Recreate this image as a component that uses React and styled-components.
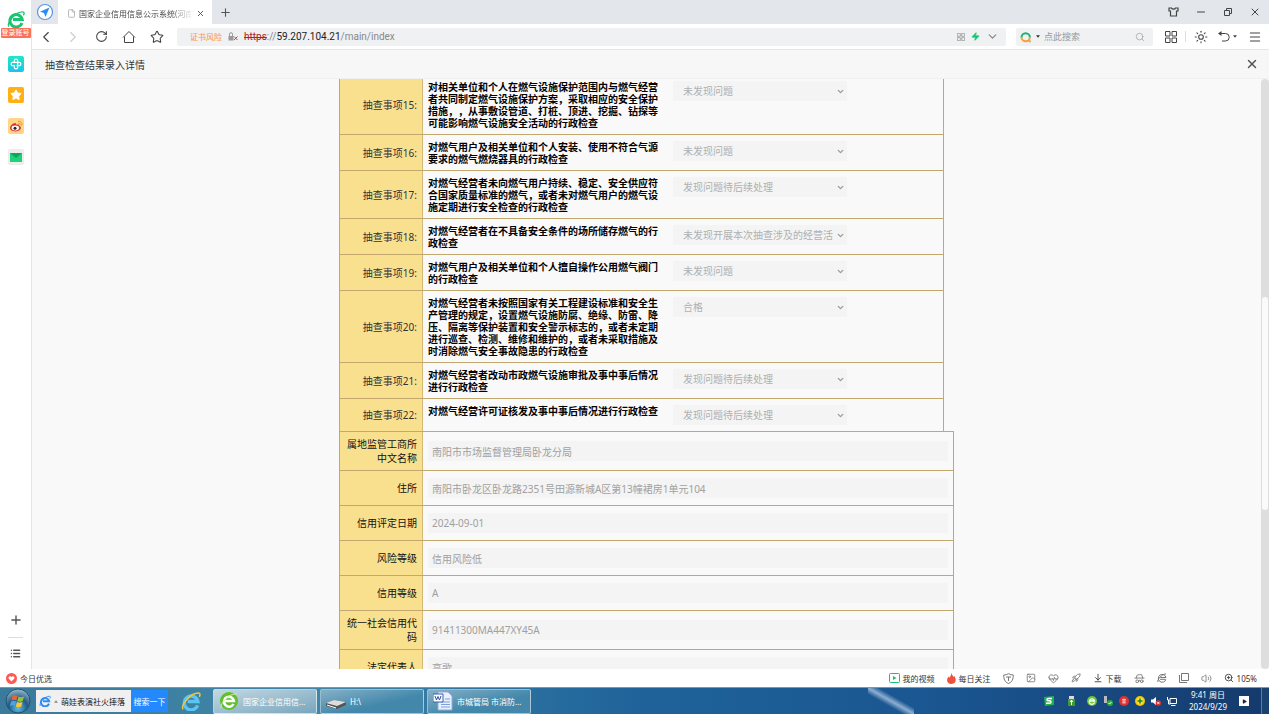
import React from "react"
import styled, { createGlobalStyle } from "styled-components"
import {
    ChevronLeft, ChevronRight, ChevronDown, RotateCw, Star, Search, Plus, X, Minus,
    Menu, List, Sun, File, Image, HeartPulse, Rocket, ArrowDownToLine, Volume2,
    ZoomIn, HatGlasses, Play, Zap
} from "lucide-react"

const CHECK_ITEMS = [
    { no: 15, text: "对相关单位和个人在燃气设施保护范围内与燃气经营者共同制定燃气设施保护方案，采取相应的安全保护措施，，从事敷设管道、打桩、顶进、挖掘、钻探等可能影响燃气设施安全活动的行政检查", result: "未发现问题" },
    { no: 16, text: "对燃气用户及相关单位和个人安装、使用不符合气源要求的燃气燃烧器具的行政检查", result: "未发现问题" },
    { no: 17, text: "对燃气经营者未向燃气用户持续、稳定、安全供应符合国家质量标准的燃气，或者未对燃气用户的燃气设施定期进行安全检查的行政检查", result: "发现问题待后续处理" },
    { no: 18, text: "对燃气经营者在不具备安全条件的场所储存燃气的行政检查", result: "未发现开展本次抽查涉及的经营活" },
    { no: 19, text: "对燃气用户及相关单位和个人擅自操作公用燃气阀门的行政检查", result: "未发现问题" },
    { no: 20, text: "对燃气经营者未按照国家有关工程建设标准和安全生产管理的规定，设置燃气设施防腐、绝缘、防雷、降压、隔离等保护装置和安全警示标志的，或者未定期进行巡查、检测、维修和维护的，或者未采取措施及时消除燃气安全事故隐患的行政检查", result: "合格" },
    { no: 21, text: "对燃气经营者改动市政燃气设施审批及事中事后情况进行行政检查", result: "发现问题待后续处理" },
    { no: 22, text: "对燃气经营许可证核发及事中事后情况进行行政检查", result: "发现问题待后续处理" },
];

const COMPANY_FIELDS = [
    { id: "office", label: "属地监管工商所中文名称", value: "南阳市市场监督管理局卧龙分局" },
    { id: "address", label: "住所", value: "南阳市卧龙区卧龙路2351号田源新城A区第13幢裙房1单元104" },
    { id: "rateDate", label: "信用评定日期", value: "2024-09-01" },
    { id: "risk", label: "风险等级", value: "信用风险低" },
    { id: "credit", label: "信用等级", value: "A" },
    { id: "code", label: "统一社会信用代码", value: "91411300MA447XY45A" },
    { id: "legal", label: "法定代表人", value: "高歌" },
];

const App = () =>
    <Screen>
        <GlobalStyle/>
        <Workspace>
            <Sidebar/>
            <Browser>
                <TabBar/>
                <Toolbar/>
                <DialogHeader>
                    <DialogTitle>抽查检查结果录入详情</DialogTitle>
                    <IconButton aria-label="关闭"><X size={14} strokeWidth={2.5}/></IconButton>
                </DialogHeader>
                <DialogBody>
                    <Form>
                        <CheckList>
                            {CHECK_ITEMS.map(item => <CheckItem key={item.no} {...item}/>)}
                        </CheckList>
                        <FieldList>
                            {COMPANY_FIELDS.map(field => <Field key={field.id} {...field}/>)}
                        </FieldList>
                    </Form>
                    <ScrollTrack><ScrollThumb/></ScrollTrack>
                </DialogBody>
            </Browser>
        </Workspace>
        <StatusBar/>
        <Taskbar/>
    </Screen>;

const CheckItem = ({ no, text, result }) =>
    <Row>
        <RowLabel htmlFor={`item${no}`}>抽查事项{no}:</RowLabel>
        <ItemText>{text}</ItemText>
        <SelectBox>
            <Select id={`item${no}`} disabled defaultValue={result}>
                <option>{result}</option>
            </Select>
            <ChevronDown size={9} strokeWidth={3.5}/>
        </SelectBox>
    </Row>;

const Field = ({ id, label, value }) =>
    <Row>
        <RowLabel htmlFor={id} $dark>{label}</RowLabel>
        <InputBox>
            <Input id={id} disabled defaultValue={value}/>
        </InputBox>
    </Row>;

const BrowserE = ({ size, color, swoosh }) =>
    <svg width={size} height={size} viewBox="0 0 24 24" fill="none" stroke={color}>
        <path d="M20 17.2A8.3 8.3 0 1 1 20.3 12.6H8" strokeWidth="4"/>
        <path d="M2.5 22C-.5 18 10 2.500 21 2.500c2.500 0 2 3 .8 4.500" stroke={swoosh || color} strokeWidth="1.800"/>
    </svg>;

const Sidebar = () =>
    <SideColumn>
        <Account>
            <BrowserE size={18} color="#17c671"/>
            <AccountBadge>登录账号</AccountBadge>
        </Account>
        <SideApps>
            <AppTile aria-label="健康" $background="linear-gradient(#1fe8c4, #1cc3ea)">
                <svg width="12" height="12" viewBox="0 0 12 12" fill="none" stroke="#fff" strokeWidth="1.200">
                    <path d="M4.300 4.300V2.800a1.700 1.700 0 0 1 3.400 0v6.400a1.700 1.700 0 0 1-3.400 0V7.700H2.800a1.700 1.700 0 0 1 0-3.400h6.400a1.700 1.700 0 0 1 0 3.400H6.500"/>
                </svg>
            </AppTile>
            <AppTile aria-label="收藏" $background="#ffb014">
                <Star size={12} fill="#fff" stroke="#fff"/>
            </AppTile>
            <AppTile aria-label="微博" $background="#ffd588">
                <svg width="14" height="14" viewBox="0 0 14 14">
                    <path d="M1 9c0-2 3-5 5-5 1.500 0 .8 1.600 1.300 1.600S10 5 10.300 6.400c.2.800 1.700.8 1.700 2.400 0 2-2.500 3.600-5.500 3.600S1 11 1 9z" fill="#e0352b"/>
                    <ellipse cx="6.300" cy="9" rx="3.700" ry="2.400" fill="#fff"/>
                    <circle cx="6" cy="9.200" r="1.500" fill="#222"/>
                    <path d="M9.200 2.200a3.400 3.400 0 0 1 3.600 4.300M9.300 4a1.600 1.600 0 0 1 1.700 2" fill="none" stroke="#f0932b"/>
                </svg>
            </AppTile>
            <AppTile aria-label="邮箱" $background="#ececec">
                <svg width="12" height="9" viewBox="0 0 12 9">
                    <path d="M0 0h12v9H0z" fill="#1fd17c"/>
                    <path d="M0 0h12L6 5z" fill="#0da65a"/>
                </svg>
            </AppTile>
        </SideApps>
        <SideTools>
            <IconButton aria-label="添加"><Plus size={14} strokeWidth={2.4}/></IconButton>
            <SideLine/>
            <IconButton aria-label="列表"><List size={11} strokeWidth={3}/></IconButton>
        </SideTools>
    </SideColumn>;

const TabBar = () =>
    <Tabs>
        <TabSlot aria-label="导航">
            <svg width="18" height="18" viewBox="0 0 18 18">
                <circle cx="9" cy="9" r="7.500" fill="#fff" stroke="#5b93e8" strokeWidth="1.200"/>
                <path d="M13.500 4.500L4 8.700l4 1.300 1.500 4z" fill="#2b8cf5"/>
            </svg>
        </TabSlot>
        <Tab>
            <File size={9} strokeWidth={1.8} color="#999"/>
            <TabTitle>国家企业信用信息公示系统(河南</TabTitle>
            <IconButton aria-label="关闭标签"><X size={9} strokeWidth={2.5}/></IconButton>
        </Tab>
        <TabSlot aria-label="新标签"><Plus size={13} strokeWidth={2}/></TabSlot>
        <WindowControls>
            <ToolButton aria-label="皮肤">
                <svg width="11" height="10" viewBox="0 0 11 10" fill="none" stroke="currentColor" strokeWidth="1.200">
                    <path d="M1 1h2.500c.5 1.500 3.500 1.500 4 0H10v3H8.500v5h-6V4H1z"/>
                </svg>
            </ToolButton>
            <ToolButton aria-label="最小化"><Minus size={12} strokeWidth={2}/></ToolButton>
            <ToolButton aria-label="还原">
                <svg width="8" height="8" viewBox="0 0 8 8" fill="none" stroke="currentColor">
                    <path d="M.5 2.500h5v5h-5zM2.500 2.500v-2h5v5h-2"/>
                </svg>
            </ToolButton>
            <ToolButton aria-label="关闭窗口"><X size={12} strokeWidth={2}/></ToolButton>
        </WindowControls>
    </Tabs>;

const GridIcon = ({ size }) =>
    <svg width={size} height={size} viewBox="0 0 12 12" fill="none" stroke="currentColor">
        <path d="M.5.5h4.500v4.500H.5zM7 .5h4.500v4.500H7zM.5 7h4.500v4.500H.5zM7 7h4.500v4.500H7z"/>
    </svg>;

const Caret = ({ up }) =>
    <svg width="4" height="3" viewBox="0 0 5 3">
        <path d={up ? "M0 3h5L2.500 0z" : "M0 0h5L2.500 3z"} fill={up ? "#888" : "currentColor"}/>
    </svg>;

const Toolbar = () =>
    <Tools>
        <NavButtons>
            <ToolButton aria-label="后退"><ChevronLeft size={18} strokeWidth={1.5}/></ToolButton>
            <ToolButton aria-label="前进" $faint><ChevronRight size={18} strokeWidth={1.5}/></ToolButton>
            <ToolButton aria-label="刷新"><RotateCw size={13} strokeWidth={1.9}/></ToolButton>
            <ToolButton aria-label="主页">
                <svg width="14" height="14" viewBox="0 0 14 14" fill="none" stroke="currentColor">
                    <path d="M1 7.500L7 1.500l6 6M2.500 6.500v6h9v-6"/>
                </svg>
            </ToolButton>
            <ToolButton aria-label="收藏"><Star size={14} strokeWidth={1.8}/></ToolButton>
        </NavButtons>
        <AddressField>
            <Risk>证书风险</Risk>
            <svg width="10" height="9" viewBox="0 0 10 9" fill="none">
                <path d="M.5 4h5v4.500h-5z" fill="#999"/>
                <path d="M1.500 4V2.200a1.500 1.500 0 0 1 3 0V4" stroke="#999"/>
                <path d="M6 4.500l3.500 3.500M9.500 4.500L6 8" stroke="#e23b3b"/>
            </svg>
            <Url><UrlScheme>https</UrlScheme>://<UrlHost>59.207.104.21</UrlHost>/main/index</Url>
            <GridIcon size={8}/>
            <Zap size={9} fill="#17c671" color="#17c671"/>
            <ChevronDown size={13} strokeWidth={2.2}/>
        </AddressField>
        <SearchField>
            <svg width="12" height="12" viewBox="0 0 12 12" fill="none" strokeWidth="2">
                <path d="M1.500 6.500a4.200 4.200 0 1 1 8.400 0" stroke="#19b36b"/>
                <path d="M1.500 6a4.200 4.200 0 0 0 8.400 0M8 8.500l2.500 2.500" stroke="#f5a13a"/>
            </svg>
            <Caret/>
            <SearchInput aria-label="搜索" placeholder="点此搜索"/>
            <Search size={10} strokeWidth={2} color="#aaa"/>
        </SearchField>
        <ToolButtons>
            <ToolButton aria-label="应用"><GridIcon size={12}/></ToolButton>
            <Divider/>
            <ToolButton aria-label="亮度"><Sun size={14} strokeWidth={1.8}/></ToolButton>
            <ToolButton aria-label="撤销">
                <svg width="12" height="11" viewBox="0 0 12 11" fill="none" stroke="currentColor">
                    <path d="M2 2.500h5.500a3.700 3.700 0 0 1 0 7.500H4"/>
                    <path d="M0 2.500L3.500 0v5z" fill="currentColor" stroke="none"/>
                </svg>
                <Caret/>
            </ToolButton>
            <ToolButton aria-label="菜单"><Menu size={14} strokeWidth={1.8}/></ToolButton>
        </ToolButtons>
    </Tools>;

const StatusBar = () =>
    <Status>
        <StatusItem>
            <svg width="11" height="11" viewBox="0 0 11 11">
                <circle cx="5.500" cy="5.500" r="5.500" fill="#fa5a55"/>
                <path d="M5.500 8.500L2.800 5.800a1.600 1.600 0 0 1 2.700-1.800 1.600 1.600 0 0 1 2.700 1.800z" fill="#fff"/>
            </svg>
            今日优选
        </StatusItem>
        <StatusGroup>
            <StatusItem>
                <svg width="11" height="10" viewBox="0 0 11 10">
                    <rect x=".5" y=".5" width="10" height="9" rx="1" fill="none" stroke="#19c172"/>
                    <path d="M4 3v4l3.500-2z" fill="#19c172"/>
                </svg>
                我的视频
            </StatusItem>
            <StatusItem>
                <svg width="9" height="11" viewBox="0 0 9 11">
                    <path d="M4.500 0c.3 2 1.500 2.500 2 4l.8-1C9.500 6 9.500 11 4.500 11S-.8 6.500 1.500 3.500l.8 1.200C3.500 3.500 4 2 4.500 0z" fill="#f0503c"/>
                </svg>
                每日关注
            </StatusItem>
            <StatusIcons>
                <svg width="11" height="11" viewBox="0 0 11 11" fill="none" stroke="currentColor">
                    <path d="M5.500.7C4 1.600 2.500 2 .7 2c0 4 1 7 4.800 8.500C9.300 9 10.300 6 10.300 2 8.500 2 7 1.600 5.500.7zM3 4h5M5.500 4v4"/>
                </svg>
                <Image size={10}/>
                <HeartPulse size={11}/>
                <Rocket size={10}/>
            </StatusIcons>
            <StatusItem><ArrowDownToLine size={10}/>下载</StatusItem>
            <StatusIcons>
                <HatGlasses size={11}/>
                <BrowserOutline/>
                <svg width="10" height="10" viewBox="0 0 10 10" fill="none" stroke="currentColor">
                    <path d="M2.500.5h7v7h-7zM.5 2v7.500H8"/>
                </svg>
                <Volume2 size={11} strokeWidth={1.8}/>
            </StatusIcons>
            <StatusItem><ZoomIn size={10}/>105%</StatusItem>
        </StatusGroup>
    </Status>;

const BrowserOutline = () =>
    <svg width="10" height="10" viewBox="0 0 10 10" fill="none" stroke="currentColor">
        <path d="M8.800 6.800A3.900 3.900 0 1 1 9 4.500H3.500M3 6.300h5.800M.8 9C.3 7 4.500 1 9 .9"/>
    </svg>;

const Taskbar = () =>
    <Task>
        <StartButton aria-label="开始">
            <svg width="26" height="26" viewBox="0 0 26 26">
                <defs>
                    <radialGradient id="orb" cx="50%" cy="80%" r="80%">
                        <stop offset="0" stopColor="#5cc0e8"/>
                        <stop offset=".5" stopColor="#225a85"/>
                        <stop offset="1" stopColor="#9cbccc"/>
                    </radialGradient>
                </defs>
                <circle cx="13" cy="13" r="12" fill="url(#orb)" stroke="#25506c"/>
                <path d="M7.500 8c2-1.200 3.500-1 5 0l-1.200 4.500c-1.500-1-3-1-5 0z" fill="#ee6236"/>
                <path d="M13.500 8.500c1.500 1 3.500 1 5.500 0L17.800 13c-2 1-4 1-5.500 0z" fill="#8cc63f"/>
                <path d="M6 13.500c2-1 3.500-1 5 0L9.800 18c-1.500-1-3-1-5 0z" fill="#4aa3e8"/>
                <path d="M12 14c1.500 1 3.500 1 5.500 0l-1.200 4.500c-2 1-4 1-5.500 0z" fill="#fdc82f"/>
            </svg>
        </StartButton>
        <HotSearch>
            <BrowserE size={12} color="#2b8cf5"/>
            <Caret up/>
            <span>萌娃表演社火摔落</span>
        </HotSearch>
        <SearchButton>搜索一下</SearchButton>
        <QuickLaunch aria-label="浏览器"><BrowserE size={20} color="#5cc4f2" swoosh="#f5c531"/></QuickLaunch>
        <TaskButton $active>
            <svg width="20" height="20" viewBox="0 0 20 20" fill="none">
                <circle cx="10" cy="10" r="9" fill="#5fbf2c"/>
                <path d="M14.500 13a5 5 0 1 1 .5-3H6" stroke="#fff" strokeWidth="2.500"/>
                <path d="M2 17C1 12 10 2 18 3" stroke="#c9ee9a"/>
            </svg>
            <TaskTitle>国家企业信用信...</TaskTitle>
        </TaskButton>
        <TaskButton>
            <svg width="20" height="20" viewBox="0 0 20 20">
                <path d="M0 12l8-3 12 2v3l-9 4-11-3z" fill="#555"/>
                <path d="M0 12l8-3 12 2-9 4z" fill="#ddd"/>
                <path d="M1 14l9 3" stroke="#fff"/>
            </svg>
            <TaskTitle>H:\</TaskTitle>
        </TaskButton>
        <TaskButton>
            <svg width="20" height="20" viewBox="0 0 20 20" fill="none">
                <path d="M5 1h10l4 4v14H5z" fill="#e8f0fb" stroke="#90abd8"/>
                <path d="M8 11h9M8 13.500h9M8 16h9M12 8h5" stroke="#7f9fdd"/>
                <path d="M0 3h10v8H0z" fill="#fff" stroke="#3b5fb5"/>
                <path d="M2 5l1.500 4L5 5.500 6.500 9 8 5" stroke="#2a4fa8"/>
            </svg>
            <TaskTitle>市城管局 市消防...</TaskTitle>
        </TaskButton>
        <Tray>
            <TrayIcons>
                <svg width="10" height="10" viewBox="0 0 10 10" fill="none">
                    <path d="M0 1l10-1v9L1 10z" fill="#21b34b"/>
                    <path d="M8 2.500H4.500c-2 0-2 2.300 0 2.300h1c2 0 2 2.500 0 2.500H2" stroke="#fff" strokeWidth="1.500"/>
                </svg>
                <svg width="7" height="10" viewBox="0 0 7 10">
                    <path d="M1 0h5v3H1z" fill="#ddd"/><path d="M0 3h7v7H0z" fill="#3f9a35"/>
                    <path d="M3.500 4v5M2 6l1.500-2L5 6" stroke="#fff" fill="none"/>
                </svg>
            </TrayIcons>
            <TrayIcons $tight>
                <svg width="10" height="10" viewBox="0 0 10 10" fill="none">
                    <circle cx="5" cy="5" r="5" fill="#65c437"/>
                    <path d="M7.500 6.500A2.700 2.700 0 1 1 7.600 5H3" stroke="#fff" strokeWidth="1.300"/>
                </svg>
                <svg width="10" height="10" viewBox="0 0 10 10" fill="none">
                    <path d="M1 0h3v7H1z" fill="#bbb"/><circle cx="7" cy="7" r="3" fill="#27ae3e"/>
                    <path d="M5.500 7l1 1 2-2" stroke="#fff"/>
                </svg>
                <svg width="10" height="10" viewBox="0 0 10 10" fill="none">
                    <circle cx="5" cy="5" r="5" fill="#d33"/>
                    <path d="M3 3.500h4M3 5h4M3 6.800h4M5 2.500v5" stroke="#ffd5d5" strokeWidth=".8"/>
                </svg>
                <svg width="10" height="10" viewBox="0 0 10 10" fill="none">
                    <circle cx="5" cy="5" r="5" fill="#f5c400"/><circle cx="5" cy="5" r="3.500" fill="#f9e03c"/>
                    <path d="M5 2.500v5M2.500 5h5" stroke="#228b22" strokeWidth="1.600"/>
                </svg>
                <svg width="10" height="10" viewBox="0 0 10 10" fill="none">
                    <path d="M0 3.500h2L5 1v8L2 6.500H0z" fill="#fff"/><circle cx="7.300" cy="7" r="2.700" fill="#e03030"/>
                    <path d="M6.200 5.900l2.200 2.200M8.400 5.900L6.200 8.100" stroke="#fff" strokeWidth=".8"/>
                </svg>
                <svg width="10" height="10" viewBox="0 0 10 10" fill="none" stroke="#fff">
                    <path d="M3 2.500h6.500v5H3zM4 9.500h4.500M.5 1v3h2M1.500 4v4h2"/>
                </svg>
            </TrayIcons>
            <Clock><span>9:41 周日</span><span>2024/9/29</span></Clock>
            <ActionButton aria-label="播放"><Play size={5} fill="#123" color="#123"/></ActionButton>
            <ShowDesktop aria-label="显示桌面"/>
        </Tray>
    </Task>;

const GlobalStyle = createGlobalStyle`
    * {
        box-sizing: border-box;
    }
    body {
        margin: 0;
        font-family: "Noto Sans", "Noto Sans CJK SC", sans-serif;
        font-size: 10px;
        color: #333;
        text-spacing-trim: space-all;
    }
    button, input, select {
        font: inherit;
        color: inherit;
        border: none;
        padding: 0;
        margin: 0;
        background: none;
    }
    svg {
        flex: none;
    }
`;

const Screen = styled.div`
    height: 100vh;
    display: flex;
    flex-direction: column;
    overflow: hidden;
    background: #fff;
`;
const Workspace = styled.div`
    flex: 1;
    min-height: 0;
    display: flex;
`;
const Browser = styled.div`
    flex: 1;
    min-width: 0;
    display: flex;
    flex-direction: column;
`;
const IconButton = styled.button`
    display: flex;
    align-items: center;
    justify-content: center;
    color: #555;
`;

const SideColumn = styled.nav`
    width: 32px;
    flex: none;
    display: flex;
    flex-direction: column;
    align-items: center;
    border-right: 1px solid #e4e4e4;
    padding: 10px 0;
`;
const Account = styled.div`
    display: flex;
    flex-direction: column;
    align-items: center;
`;
const AccountBadge = styled.span`
    background: #ff7058;
    color: #fff;
    font-size: 7px;
    line-height: 10px;
    padding: 0 1px;
    border-radius: 1px;
    white-space: nowrap;
`;
const SideApps = styled.div`
    display: flex;
    flex-direction: column;
    gap: 15px;
    margin-top: 18px;
`;
const AppTile = styled.button`
    width: 16px;
    height: 16px;
    border-radius: 2px;
    display: flex;
    align-items: center;
    justify-content: center;
    background: ${props => props.$background};
`;
const SideTools = styled.div`
    margin-top: auto;
    display: flex;
    flex-direction: column;
    align-items: center;
    gap: 10px;
`;
const SideLine = styled.span`
    width: 15px;
    height: 1px;
    background: #ddd;
`;

const Tabs = styled.div`
    height: 24px;
    flex: none;
    display: flex;
    background: #e3e6ea;
`;
const TabSlot = styled.button`
    width: 26px;
    display: flex;
    align-items: center;
    justify-content: center;
    color: #555;
`;
const Tab = styled.div`
    width: 154px;
    display: flex;
    align-items: center;
    gap: 3px;
    padding: 2px 7px 0 9px;
    background: #fff;
`;
const TabTitle = styled.span`
    flex: 1;
    font-size: 8px;
    color: #444;
    white-space: nowrap;
    mask-image: linear-gradient(to right, #000 80%, transparent);
`;
const WindowControls = styled.div`
    margin-left: auto;
    display: flex;
    padding-right: 1px;
`;
const ToolButton = styled.button`
    width: 27px;
    display: flex;
    align-items: center;
    justify-content: center;
    gap: 3px;
    color: ${props => props.$faint ? "#ccc" : "#444"};
`;

const Tools = styled.div`
    height: 26px;
    flex: none;
    display: flex;
    align-items: center;
    border-bottom: 1px solid #e6e6e6;
`;
const NavButtons = styled.div`
    display: flex;
    align-items: center;
    width: 145px;
    padding-right: 7px;
    justify-content: space-between;
`;
const AddressField = styled.div`
    flex: 1;
    height: 18px;
    display: flex;
    align-items: center;
    gap: 6px;
    padding: 0 7px 0 13px;
    border-radius: 2px;
    background: #eff1f3;
    color: #888;
`;
const Risk = styled.span`
    font-size: 8px;
    color: #ff9040;
`;
const Url = styled.span`
    flex: 1;
    font-family: Roboto, "Noto Sans", sans-serif;
`;
const UrlScheme = styled.span`
    color: #b02020;
    text-decoration: line-through;
`;
const UrlHost = styled.span`
    color: #222;
`;
const SearchField = styled.div`
    width: 137px;
    height: 18px;
    margin-left: 10px;
    display: flex;
    align-items: center;
    gap: 4px;
    padding: 0 8px 0 4px;
    border-radius: 2px;
    background: #eff1f3;
`;
const SearchInput = styled.input`
    flex: 1;
    min-width: 0;
    font-size: 9px;
    &::placeholder {
        color: #999;
    }
`;
const ToolButtons = styled.div`
    display: flex;
    align-items: center;
    padding: 0 1px 0 4px;
`;
const Divider = styled.span`
    width: 1px;
    height: 11px;
    margin: 0 1px;
    background: #ddd;
`;

const DialogHeader = styled.header`
    height: 29px;
    flex: none;
    display: flex;
    align-items: center;
    justify-content: space-between;
    padding: 0 10px 0 13px;
    background: #f7f7f7;
    border-bottom: 1px solid #f0f0f0;
`;
const DialogTitle = styled.h1`
    margin: 0;
    font-size: 10px;
    font-weight: 400;
`;
const DialogBody = styled.main`
    flex: 1;
    min-height: 0;
    display: flex;
    overflow: hidden;
    background: #f9f9f9;
`;
const Form = styled.form`
    width: 615px;
    max-width: 100%;
    margin: -4px auto 0;
`;
const Row = styled.div`
    display: flex;
    border-bottom: 1px solid #c2a86c;
`;
const CheckList = styled.section`
    margin-right: 10px;
    border: solid #c2a86c;
    border-width: 0 1px;
    ${Row}:last-child {
        border-bottom: none;
    }
`;
const FieldList = styled.section`
    border: 1px solid #c2a86c;
`;
const RowLabel = styled.label`
    width: 83px;
    flex: none;
    display: flex;
    align-items: center;
    justify-content: flex-end;
    padding: 5px;
    line-height: 14px;
    text-align: right;
    color: ${props => props.$dark ? "#111" : "#333"};
    background: #f9e08f;
    border-right: 1px solid #d3b877;
`;
const ItemText = styled.p`
    width: 240px;
    flex: none;
    margin: 0;
    padding: 6px 5px 5px;
    line-height: 12px;
    font-weight: 700;
    color: #000;
`;
const SelectBox = styled.div`
    display: flex;
    align-items: center;
    align-self: flex-start;
    width: 174px;
    height: 20px;
    margin: 6px 10px;
    background: #f4f4f4;
    color: #999;
    padding: 0 2px 0 10px;
`;
const Select = styled.select`
    flex: 1;
    min-width: 0;
    appearance: none;
    opacity: 1;
    color: #b0b0b0;
`;
const InputBox = styled.div`
    flex: 1;
    display: flex;
    align-items: center;
    padding: 7px 5px;
`;
const Input = styled.input`
    width: 100%;
    height: 20px;
    padding: 0 4px;
    background: #f4f4f4;
    color: #a0a0a0;
`;
const ScrollTrack = styled.div`
    width: 8px;
    display: grid;
    grid-template-rows: 37fr 36fr 27fr;
    border-radius: 4px;
    background: #dedede;
`;
const ScrollThumb = styled.span`
    grid-row: 2;
    margin: 0 1px;
    border-radius: 3px;
    background: #fafafa;
`;

const Status = styled.footer`
    height: 18px;
    flex: none;
    display: flex;
    align-items: center;
    justify-content: space-between;
    padding: 0 12px 0 6px;
    font-size: 8px;
    background: #fff;
`;
const StatusGroup = styled.div`
    display: flex;
    align-items: center;
    gap: 12px;
`;
const StatusItem = styled.span`
    display: flex;
    align-items: center;
    gap: 3px;
`;
const StatusIcons = styled.span`
    display: flex;
    align-items: center;
    gap: 12px;
    color: #777;
`;

const Task = styled.footer`
    height: 27px;
    flex: none;
    display: flex;
    align-items: center;
    border-top: 1px solid #8a949c;
    color: #fff;
    font-size: 8px;
    background:
        linear-gradient(to top right, transparent 38%, rgba(190, 210, 235, 0.7) 50%, transparent 62%) 71% 0 / 46px 100% no-repeat,
        linear-gradient(to right, #3a7a9c, #3f86a8 25%, #1f639a 50%, #1a5590 75%, #153a6c);
`;
const StartButton = styled.button`
    width: 36px;
    display: flex;
    justify-content: center;
`;
const HotSearch = styled.div`
    width: 95px;
    height: 22px;
    display: flex;
    align-items: center;
    gap: 3px;
    padding-left: 3px;
    white-space: nowrap;
    color: #111;
    background: #f0f0f0;
`;
const SearchButton = styled.button`
    width: 37px;
    height: 22px;
    background: #2489ff;
`;
const QuickLaunch = styled.button`
    width: 45px;
    display: flex;
    justify-content: center;
`;
const TaskButton = styled.button`
    width: 104px;
    height: 25px;
    margin-right: 3px;
    display: flex;
    align-items: center;
    gap: 4px;
    padding: 0 5px;
    border: 1px solid rgba(255, 255, 255, 0.45);
    border-radius: 2px;
    background: ${props => props.$active
        ? "linear-gradient(to bottom right, #c3d8e2, #78a6bd)"
        : "linear-gradient(to bottom right, #86b0c6, #4388ab 60%)"};
`;
const TaskTitle = styled.span`
    white-space: nowrap;
`;
const Tray = styled.div`
    margin-left: auto;
    height: 100%;
    display: flex;
    align-items: center;
    gap: 12px;
`;
const TrayIcons = styled.span`
    display: flex;
    gap: ${props => props.$tight ? "6px" : "14px"};
`;
const Clock = styled.time`
    display: flex;
    flex-direction: column;
    align-items: center;
    line-height: 12px;
`;
const ActionButton = styled.button`
    width: 10px;
    height: 10px;
    display: flex;
    align-items: center;
    justify-content: center;
    background: #fff;
`;
const ShowDesktop = styled.button`
    width: 8px;
    height: 100%;
    border-left: 1px solid #5a7ca0;
    background: #1a4270;
`;

export default App
